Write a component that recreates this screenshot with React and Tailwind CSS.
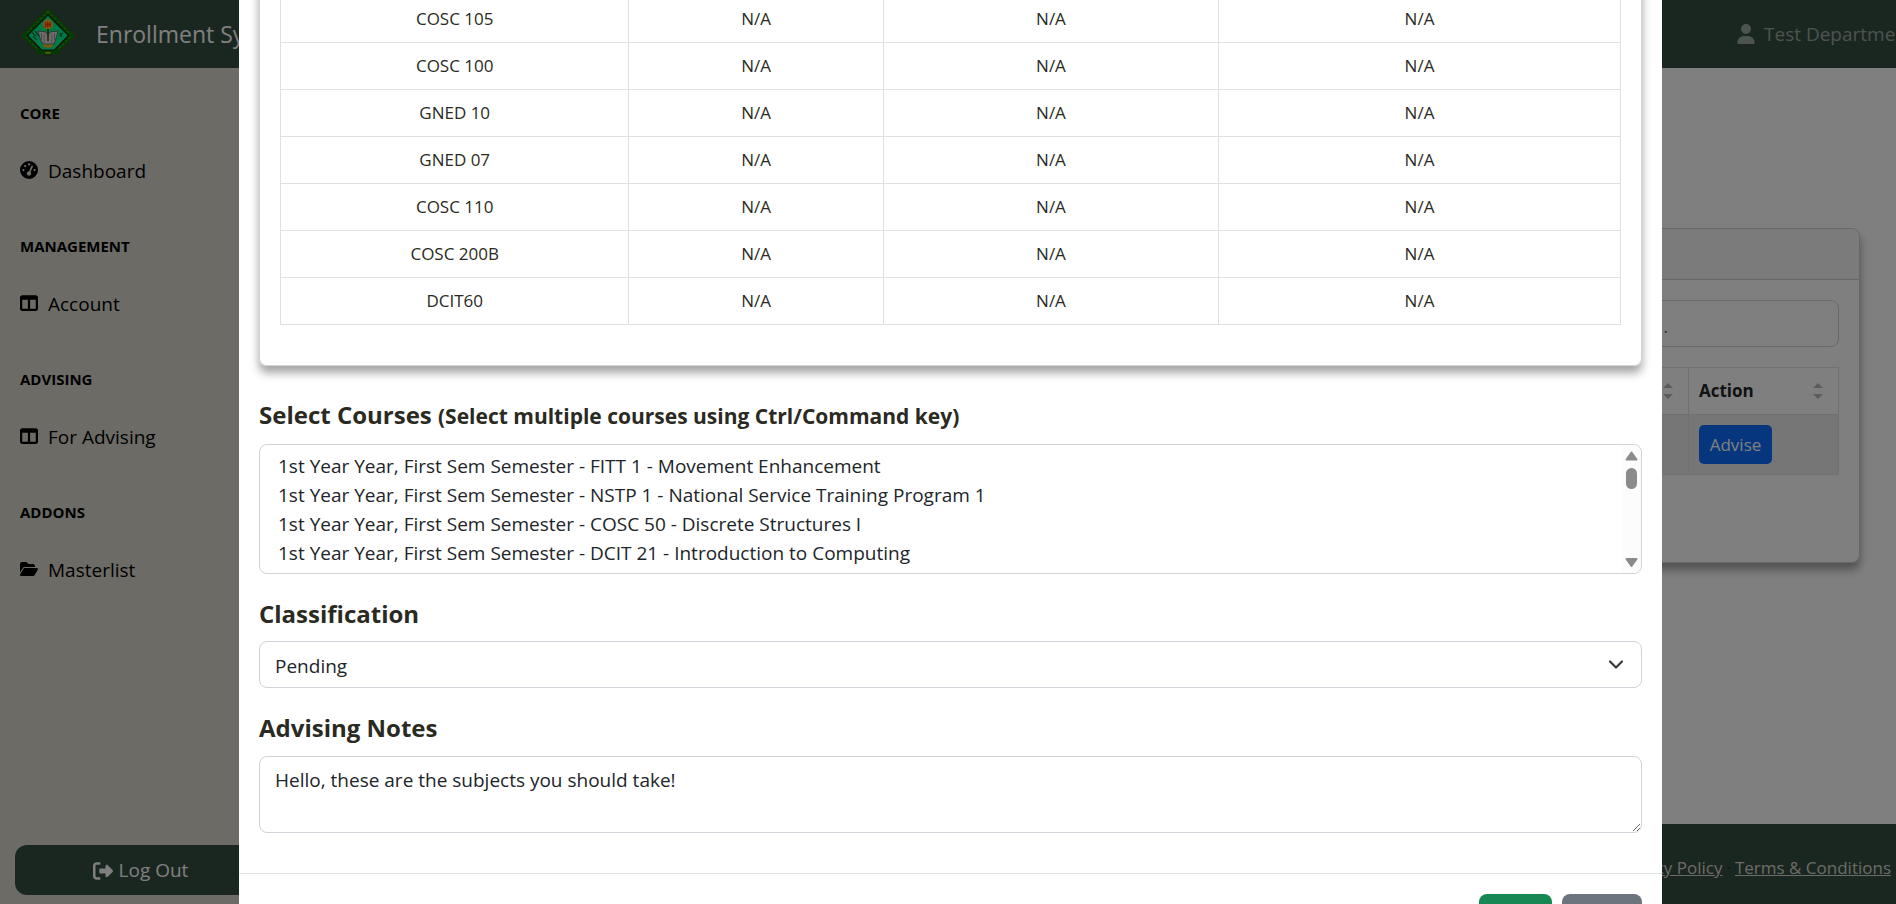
import { FaGaugeHigh, FaTableColumns, FaFolderOpen, FaRightFromBracket, FaUser } from "react-icons/fa6";

const NAV = [
  { heading: "Core", label: "Dashboard", Icon: FaGaugeHigh },
  { heading: "Management", label: "Account", Icon: FaTableColumns },
  { heading: "Advising", label: "For Advising", Icon: FaTableColumns },
  { heading: "Addons", label: "Masterlist", Icon: FaFolderOpen },
];

const COURSES = ["COSC 105", "COSC 100", "GNED 10", "GNED 07", "COSC 110", "COSC 200B", "DCIT60"];

const OPTIONS = [
  "1st Year Year, First Sem Semester - FITT 1 - Movement Enhancement",
  "1st Year Year, First Sem Semester - NSTP 1 - National Service Training Program 1",
  "1st Year Year, First Sem Semester - COSC 50 - Discrete Structures I",
  "1st Year Year, First Sem Semester - DCIT 21 - Introduction to Computing",
  "1st Year Year, First Sem Semester - DCIT 22 - Computer Programming I",
];

function Logo() {
  return (
    <svg className="-mt-1 h-[50px] w-[58px] shrink-0" viewBox="0 0 58 50" aria-hidden="true">
      <path d="M29 0.500 56.500 28.500 37.500 48H20.500L1.500 28.500Z" fill="#007800" stroke="#111" strokeWidth="1" />
      <path d="M29 0.500 56.500 28.500 37.500 48H20.500L1.500 28.500Z" fill="none" stroke="#8a8a70" strokeWidth="0.5" />
      <path d="M29 4.500 52 27.500M29 4.500 6 27.500M7 30 19 42.500M51 30 39 42.500" fill="none" stroke="#a8a030" strokeWidth="1" strokeDasharray="2 2.6" />
      <path d="M26.500 45.800H31.500" stroke="#d4c830" strokeWidth="1.4" />
      <path d="M29 8 49.500 28.500 35.500 43H22.500L8.500 28.500Z" fill="#00f58a" stroke="#1c1c1c" strokeWidth="1.2" />
      <path d="M13 25.500 17 29M14 29 18 33M16 24 20 29M40 29 44 26M41 26 43 30" stroke="#087a50" strokeWidth="1.4" />
      <circle cx="29" cy="17.500" r="5" fill="#ffb414" />
      <path d="M26.500 15V20.500M28.700 14.500V20.500M31.200 15V20M27 17.500H32" stroke="#ff3310" strokeWidth="1.4" />
      <path d="M19 24 27 25 29 28 31 25 39 24 36.500 33 35 37H24L21.500 33Z" fill="#dcdcdc" stroke="#555" strokeWidth="0.8" />
      <path d="M22.500 26V33M25.200 27V36M32.800 27V36M35.500 26V33" stroke="#888" strokeWidth="0.8" />
      <path d="M29 22V34" stroke="#5b3b10" strokeWidth="1.6" />
      <path d="M24 37.500H34L33 40.500H25Z" fill="#f0b420" />
    </svg>
  );
}

function Sorter() {
  return (
    <svg className="h-4 w-[10px]" viewBox="0 0 10 16" fill="#b9b9b9" aria-hidden="true">
      <path d="M0 5 5 0 10 5ZM0 11 5 16 10 11Z" />
    </svg>
  );
}

function Sidebar() {
  return (
    <nav className="flex w-[281px] shrink-0 flex-col bg-[#dad7cd] text-black">
      <div className="grow">
        {NAV.map(({ heading, label, Icon }) => (
          <div key={heading}>
            <div className="px-5 pt-[34px] pb-[17px] text-[15px] leading-[22px] font-bold uppercase">{heading}</div>
            <a href="#" className="flex h-[60px] items-center gap-[10px] px-5 text-[19px]">
              <Icon className="-mt-[3px] h-[18px] w-auto shrink-0" />
              {label}
            </a>
          </div>
        ))}
      </div>
      <button className="mx-[15px] mb-[9px] flex h-[50px] items-center justify-center gap-[6px] rounded-xl bg-[#344e41] pt-px text-[19px] text-white">
        <FaRightFromBracket className="size-5" />
        Log Out
      </button>
    </nav>
  );
}

function Page() {
  return (
    <div className="flex h-screen flex-col overflow-hidden">
      <header className="flex h-[68px] shrink-0 items-center bg-[#344e41] pl-[19px] text-white">
        <Logo />
        <a href="#" className="ml-[19px] text-[23px]">Enrollment System</a>
        <a href="#" className="ml-auto flex w-[159px] shrink-0 items-center gap-[9px] text-[19px] whitespace-nowrap text-white/50">
          <FaUser className="h-5 w-[18px] shrink-0" />
          Test Department
        </a>
      </header>
      <div className="flex min-h-0 grow">
        <Sidebar />
        <div className="flex min-w-0 grow flex-col bg-white">
          <main className="grow pt-40 pr-9 pl-[30px]">
            <section className="rounded-lg border border-[#cfcfcf] bg-white shadow-[0_7px_10px_rgba(0,0,0,0.36)]">
              <div className="h-[51px] rounded-t-lg border-b border-[#cfcfcf] bg-[#f7f7f7]" />
              <div className="px-5 pt-5 pb-[87px]">
                <div className="flex justify-end">
                  <input
                    aria-label="Search"
                    placeholder="Search..."
                    className="h-[47px] w-[262px] rounded-lg border border-[#ced4da] px-[15px] pt-1 text-[19px] placeholder:text-[#6c757d]"
                  />
                </div>
                <table className="mt-5 w-full border-collapse text-[17px] text-[#212529]">
                  <thead>
                    <tr className="h-[47px]">
                      <th aria-label="Student" className="border border-[#dee2e6] pr-[15px] pl-[10px]">
                        <div className="flex items-center justify-end"><Sorter /></div>
                      </th>
                      <th className="w-[150px] border border-[#dee2e6] pr-[15px] pl-[10px]">
                        <div className="flex items-center justify-between">Action<Sorter /></div>
                      </th>
                    </tr>
                  </thead>
                  <tbody>
                    <tr className="h-[60px] bg-[#ececec]">
                      <td className="border border-[#dee2e6]" />
                      <td className="border border-[#dee2e6] px-[10px]">
                        <button className="h-[39px] w-[73px] rounded-[5px] bg-[#0d6efd] text-white">Advise</button>
                      </td>
                    </tr>
                  </tbody>
                </table>
              </div>
            </section>
          </main>
          <footer className="flex h-20 shrink-0 items-start justify-end gap-1 bg-[#344e41] pt-[31px] pr-[5px] text-[17px] text-[#212529]">
            <a href="#" className="text-[#dad7cd] underline">Privacy Policy</a>
            ·
            <a href="#" className="text-[#dad7cd] underline">Terms &amp; Conditions</a>
          </footer>
        </div>
      </div>
    </div>
  );
}

function CourseTable() {
  return (
    <section className="rounded-lg border border-[#d3d3d3] px-5 pt-[41px] pb-10 shadow-[0_7px_10px_rgba(0,0,0,0.36)]">
      <table className="w-full table-fixed border-collapse text-center text-[17px]">
        <colgroup>
          <col className="w-[26%]" />
          <col className="w-[19%]" />
          <col className="w-[25%]" />
          <col className="w-[30%]" />
        </colgroup>
        <tbody>
          {COURSES.map((course) => (
            <tr key={course} className="h-[47px]">
              <td className="border border-[#dee2e6]">{course}</td>
              <td className="border border-[#dee2e6]">N/A</td>
              <td className="border border-[#dee2e6]">N/A</td>
              <td className="border border-[#dee2e6]">N/A</td>
            </tr>
          ))}
        </tbody>
      </table>
    </section>
  );
}

function Modal() {
  return (
    <div className="fixed inset-0 overflow-hidden bg-black/50 pr-[234px] pl-[239px]">
      <div role="dialog" aria-modal="true" className="-mt-[47px] bg-white text-[#2a2a22]">
        <div className="px-5">
          <CourseTable />

          <label htmlFor="courses" className="mt-[34px] mb-[13px] block text-2xl leading-[30px] font-bold">
            Select Courses <span className="text-[21px]">(Select multiple courses using Ctrl/Command key)</span>
          </label>
          <div className="relative">
            <select
              id="courses"
              multiple
              className="block h-[130px] w-full overflow-hidden rounded-lg border border-[#ced4da] px-[14px] pt-2 text-[19px] text-[#212529] outline-none"
            >
              {OPTIONS.map((option) => (
                <option key={option} className="h-[29px] px-1 py-0 leading-[29px]">{option}</option>
              ))}
            </select>
            <svg className="absolute top-px right-px h-32 w-[19px] rounded-r-lg bg-[#fcfcfc]" viewBox="0 0 19 128" fill="#8b8b8b" stroke="#8b8b8b" strokeLinejoin="round" aria-hidden="true">
              <path d="M4.500 14.500 9.500 7.500 14.500 14.500ZM4.500 114 9.500 121 14.500 114Z" strokeWidth="2" />
              <rect x="4" y="23" width="11" height="21" rx="5.500" stroke="none" />
            </svg>
          </div>

          <label htmlFor="classification" className="mt-[25px] mb-[12px] block text-2xl leading-[30px] font-bold">
            Classification
          </label>
          <div className="relative">
            <select
              id="classification"
              defaultValue="Pending"
              className="block h-[47px] w-full appearance-none rounded-lg border border-[#ced4da] bg-white px-[15px] pt-[3px] text-[19px] text-[#212529]"
            >
              <option>Pending</option>
            </select>
            <svg className="pointer-events-none absolute top-[14px] right-4 size-5" viewBox="0 0 20 20" fill="none" stroke="#343a40" strokeWidth="2.200" strokeLinecap="round" strokeLinejoin="round" aria-hidden="true">
              <path d="M4 6.500 10 12.500 16 6.500" />
            </svg>
          </div>

          <label htmlFor="notes" className="mt-[25px] mb-[13px] block text-2xl leading-[30px] font-bold">
            Advising Notes
          </label>
          <textarea
            id="notes"
            defaultValue="Hello, these are the subjects you should take!"
            className="block h-[77px] w-full resize-y rounded-lg border border-[#ced4da] px-[15px] py-2 text-[19px] leading-[30px] text-[#212529]"
          />
        </div>
        <div className="mt-10 flex justify-end gap-[10px] border-t border-[#dee2e6] px-5 py-5 text-[19px] text-white">
          <button className="h-[47px] w-[73px] rounded-lg bg-[#198754]">Save</button>
          <button className="h-[47px] w-20 rounded-lg bg-[#6c757d]">Close</button>
        </div>
      </div>
    </div>
  );
}

export default function App() {
  return (
    <div className="font-['Open_Sans','Noto_Sans',sans-serif]">
      <Page />
      <Modal />
    </div>
  );
}
